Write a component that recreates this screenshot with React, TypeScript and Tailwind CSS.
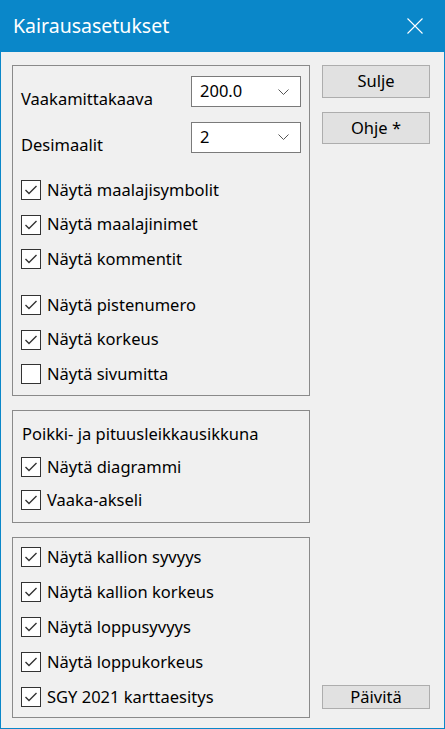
import { ReactNode } from "react";

const font = { fontFamily: '"Noto Sans", "Open Sans", sans-serif' };

function Check({ label, checked = true }: { label: string; checked?: boolean }) {
  return (
    <div className="flex h-[20px] items-center gap-[6px]">
      <span className="flex size-[20px] shrink-0 items-center justify-center border border-[#333333] bg-white">
        {checked && (
          <svg width="18" height="18" viewBox="0 0 18 18" fill="none">
            <polyline points="3.5,9 7,12.5 14.5,5" stroke="#333333" strokeWidth="1.4" />
          </svg>
        )}
      </span>
      <span className="whitespace-nowrap text-[16.5px] leading-none text-black">{label}</span>
    </div>
  );
}

function Combo({ value }: { value: string }) {
  return (
    <div className="flex h-[31px] w-[110px] items-center justify-between border border-[#7a7a7a] bg-white pl-[8px] pr-[11px]">
      <span className="text-[16.5px] leading-none text-black">{value}</span>
      <svg width="11" height="6" viewBox="0 0 11 6" fill="none">
        <polyline points="0.5,0.5 5.5,5.5 10.5,0.5" stroke="#555555" strokeWidth="1" />
      </svg>
    </div>
  );
}

function Group({ children, className }: { children: ReactNode; className: string }) {
  return <div className={"flex flex-col border border-[#8a8a8a] " + className}>{children}</div>;
}

function Button({ label, className }: { label: string; className: string }) {
  return (
    <button
      type="button"
      className={"flex w-[108px] items-center justify-center border border-[#adadad] bg-[#e1e1e1] text-[16.5px] leading-none text-black " + className}
    >
      {label}
    </button>
  );
}

export default function App() {
  return (
    <div className="flex h-[729px] w-[445px] flex-col bg-[#0a87c9] px-px pb-px" style={font}>
      <div className="flex h-[52px] shrink-0 items-center justify-between pl-[12px] pr-[21px]">
        <span className="text-[19.5px] leading-none text-white">Kairausasetukset</span>
        <svg width="16" height="16" viewBox="0 0 16 16" fill="none">
          <path d="M0.5 0.5 L15.5 15.5 M15.5 0.5 L0.5 15.5" stroke="white" strokeWidth="1.1" />
        </svg>
      </div>

      <div className="flex flex-1 bg-[#f0f0f0] pl-[11px]">
        <div className="flex w-[298px] flex-col">
          <Group className="mt-[13px] h-[331px] pl-[8px] pr-[8px] pt-[10px]">
            <div className="flex items-start justify-between">
              <span className="mt-[15px] text-[16.5px] leading-none text-black">Vaakamittakaava</span>
              <Combo value="200.0" />
            </div>
            <div className="mt-[14px] flex items-start justify-between">
              <span className="mt-[15px] text-[16.5px] leading-none text-black">Desimaalit</span>
              <Combo value="2" />
            </div>
            <div className="mt-[27px] flex flex-col gap-[14.5px]">
              <Check label="Näytä maalajisymbolit" />
              <Check label="Näytä maalajinimet" />
              <Check label="Näytä kommentit" />
            </div>
            <div className="mt-[26px] flex flex-col gap-[14.5px]">
              <Check label="Näytä pistenumero" />
              <Check label="Näytä korkeus" />
              <Check label="Näytä sivumitta" checked={false} />
            </div>
          </Group>

          <Group className="mt-[14px] h-[113px] pl-[8px] pt-[13px]">
            <span className="pl-[1px] text-[16.5px] leading-[20px] text-black">Poikki- ja pituusleikkausikkuna</span>
            <div className="mt-[13px] flex flex-col gap-[13px]">
              <Check label="Näytä diagrammi" />
              <Check label="Vaaka-akseli" />
            </div>
          </Group>

          <Group className="mt-[14px] h-[181px] pl-[8px] pt-[9px]">
            <div className="flex flex-col gap-[15px]">
              <Check label="Näytä kallion syvyys" />
              <Check label="Näytä kallion korkeus" />
              <Check label="Näytä loppusyvyys" />
              <Check label="Näytä loppukorkeus" />
              <Check label="SGY 2021 karttaesitys" />
            </div>
          </Group>
        </div>

        <div className="ml-[12px] flex flex-col">
          <Button label="Sulje" className="mt-[13px] h-[33px]" />
          <Button label="Ohje *" className="mt-[14px] h-[32px]" />
          <Button label="Päivitä" className="mt-auto mb-[19px] h-[24px]" />
        </div>
      </div>
    </div>
  );
}
